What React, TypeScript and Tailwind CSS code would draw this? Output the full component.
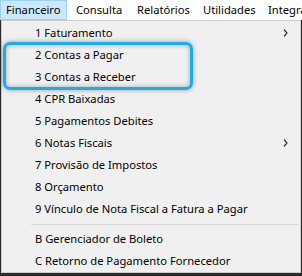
import React from "react";

const Chevron = () => (
  <svg width="5" height="8" viewBox="0 0 5 8" className="block">
    <path d="M1 0.5 L4 4 L1 7.5" fill="none" stroke="#333" strokeWidth="1.2" />
  </svg>
);

const items: { label: string; sub?: boolean }[] = [
  { label: "1 Faturamento", sub: true },
  { label: "2 Contas a Pagar" },
  { label: "3 Contas a Receber" },
  { label: "4 CPR Baixadas" },
  { label: "5 Pagamentos Debites" },
  { label: "6 Notas Fiscais", sub: true },
  { label: "7 Provisão de Impostos" },
  { label: "8 Orçamento" },
  { label: "9 Vínculo de Nota Fiscal a Fatura a Pagar" },
];

const items2 = ["B Gerenciador de Boleto", "C Retorno de Pagamento Fornecedor"];

function Item({ label, sub }: { label: string; sub?: boolean }) {
  return (
    <div className="flex h-[22px] items-center pl-[33px] pr-[12px]">
      <span className="flex-1 whitespace-nowrap">{label}</span>
      {sub && <Chevron />}
    </div>
  );
}

export default function App() {
  return (
    <div
      className="relative h-[276px] w-[302px] overflow-hidden bg-[#2a2a2a] text-[11.2px] text-black"
      style={{ fontFamily: '"Noto Sans", "Open Sans", sans-serif' }}
    >
      <div className="flex h-[20px] items-stretch overflow-hidden bg-white">
        <div className="flex w-[67px] shrink-0 items-center border border-[#99d1ff] bg-[#cce8ff] pl-[5px]">Financeiro</div>
        <div className="flex w-[63px] shrink-0 items-center pl-[9px]">Consulta</div>
        <div className="flex w-[66px] shrink-0 items-center pl-[7px]">Relatórios</div>
        <div className="flex w-[65px] shrink-0 items-center pl-[7px]">Utilidades</div>
        <div className="flex shrink-0 items-center pl-[7px] whitespace-nowrap">Integrações</div>
      </div>
      <div className="ml-[1px] h-[253px] w-[300px] border border-[#cccccc] bg-[#f0f0f0] pt-[1px] leading-none">
        {items.map((it) => (
          <Item key={it.label} label={it.label} sub={it.sub} />
        ))}
        <div className="flex h-[8px] items-center pl-[29px] pr-[2px]">
          <div className="h-px w-full bg-[#d7d7d7]" />
        </div>
        {items2.map((l) => (
          <Item key={l} label={l} />
        ))}
      </div>
      <div className="pointer-events-none absolute left-[3px] top-[42px] h-[48px] w-[190px] rounded-[7px] border-[3px] border-[#18aeea] shadow-[0_0_5px_rgba(0,0,0,0.35),inset_0_0_5px_rgba(0,0,0,0.3)]" />
    </div>
  );
}
